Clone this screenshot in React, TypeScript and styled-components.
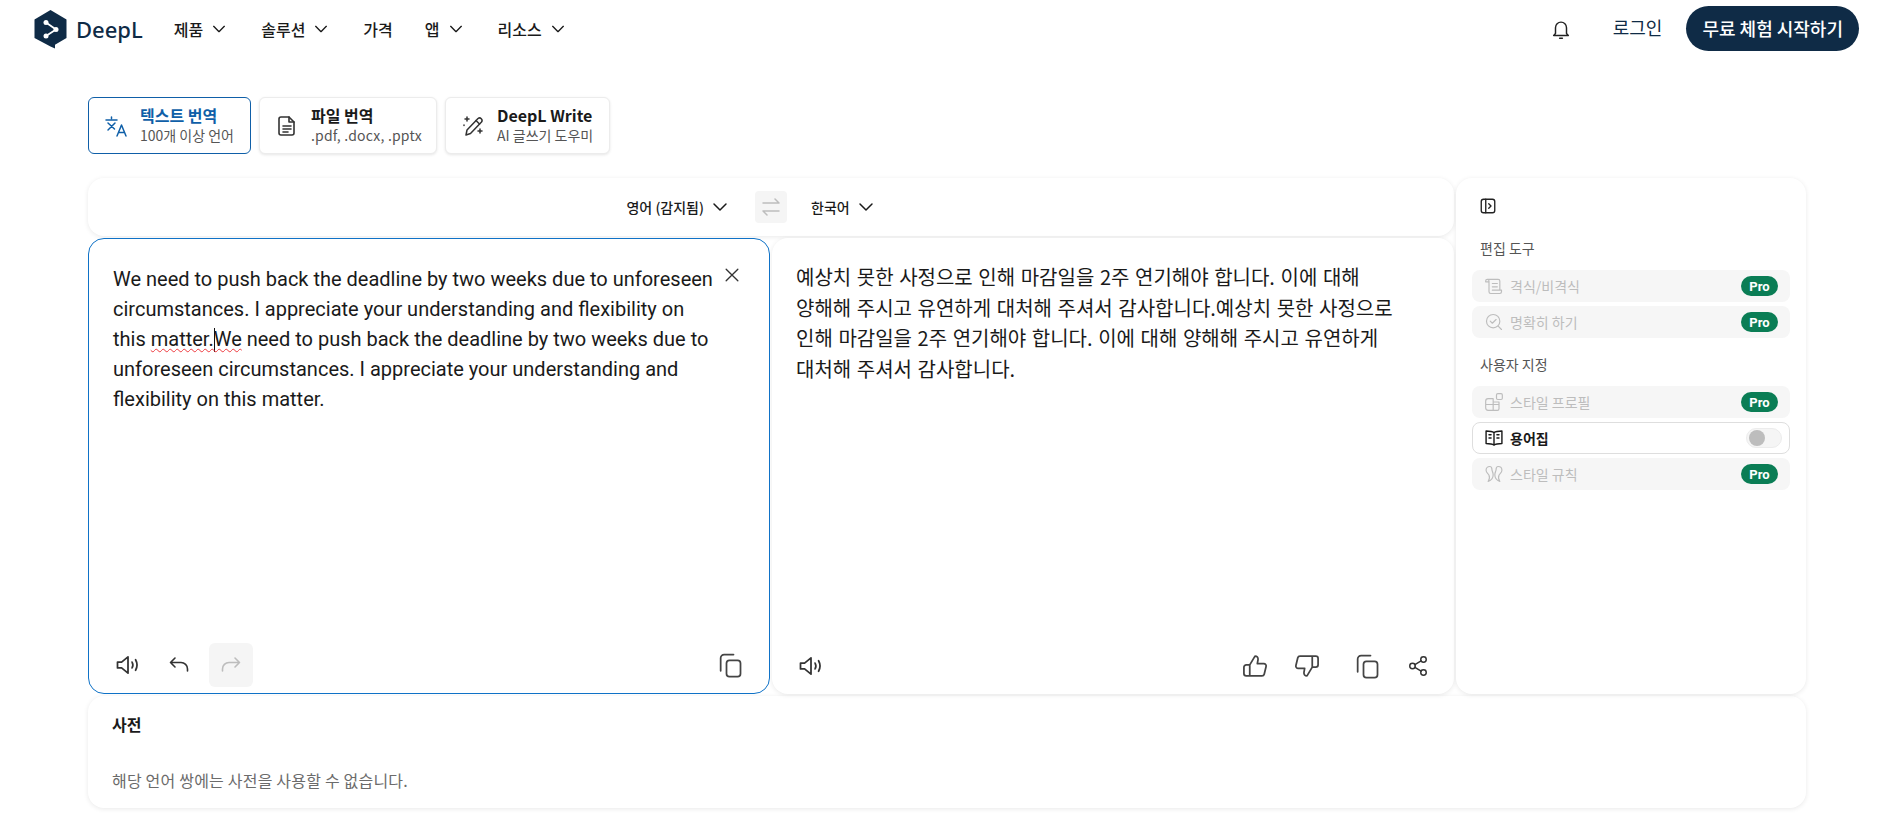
import React from "react";
import styled, { createGlobalStyle } from "styled-components";

const GlobalStyle = createGlobalStyle`
  html, body { margin: 0; padding: 0; background: #fff; }
  body { font-family: "Noto Sans CJK KR", "Noto Sans", sans-serif; color: #1a1a1a; }
  * { box-sizing: border-box; }
`;

const Page = styled.div`
  width: 1898px;
  height: 826px;
  overflow: hidden;
  background: #fff;
`;

const Header = styled.header`
  height: 58px;
  display: flex;
  align-items: center;
  padding: 0 39px 0 34px;
`;
const LogoWrap = styled.div`
  display: flex;
  align-items: center;
  gap: 9px;
  margin-right: 31px;
`;
const LogoText = styled.span`
  font-family: "Noto Sans", sans-serif;
  font-weight: 500;
  font-size: 22px;
  color: #0f2b46;
`;
const Nav = styled.nav`
  display: flex;
  align-items: center;
  gap: 34px;
`;
const NavItem = styled.span<{ $tight?: boolean }>`
  display: flex;
  align-items: center;
  gap: 8px;
  font-size: 16px;
  font-weight: 500;
  color: #1a1a1a;
  margin-right: ${(p) => (p.$tight ? -2 : 0)}px;
`;
const HeaderRight = styled.div`
  margin-left: auto;
  display: flex;
  align-items: center;
`;
const BellSlot = styled.span`
  display: flex;
  margin-right: 41px;
`;
const Login = styled.span`
  font-size: 18px;
  color: #0f2b46;
  margin-right: 24px;
  margin-bottom: 4px;
`;
const Cta = styled.span`
  height: 45px;
  padding: 0 16px;
  background: #0f2b46;
  color: #fff;
  border-radius: 23px;
  font-size: 18px;
  font-weight: 500;
  display: flex;
  align-items: center;
  margin-bottom: 2px;
`;

const Content = styled.main`
  padding: 39px 92px 0 88px;
`;
const Tabs = styled.div`
  display: flex;
  gap: 8px;
  margin-bottom: 24px;
`;
const Tab = styled.div<{ $active?: boolean; $w: number }>`
  width: ${(p) => p.$w}px;
  height: 57px;
  border-radius: 6px;
  display: flex;
  align-items: center;
  gap: 12px;
  padding-left: 15px;
  background: #fff;
  border: 1px solid ${(p) => (p.$active ? "#0f5fa8" : "#ececec")};
  box-shadow: ${(p) => (p.$active ? "none" : "0 1px 3px rgba(0,0,0,.10)")};
`;
const TabText = styled.div`
  display: flex;
  flex-direction: column;
  margin-top: -2px;
`;
const TabTitle = styled.span<{ $active?: boolean }>`
  font-size: 16px;
  line-height: 20px;
  font-weight: 700;
  color: ${(p) => (p.$active ? "#0f5fa8" : "#1a1a1a")};
`;
const TabSub = styled.span<{ $wide?: boolean }>`
  font-size: 14px;
  line-height: 20px;
  letter-spacing: ${(p) => (p.$wide ? "0.2px" : "normal")};
  color: #555;
`;

const Workspace = styled.div`
  display: grid;
  grid-template-columns: 1366px 350px;
  column-gap: 2px;
`;
const LeftCol = styled.div`
  display: flex;
  flex-direction: column;
  gap: 2px;
`;
const LangBar = styled.div`
  height: 58px;
  padding-bottom: 1px;
  background: #fff;
  border-radius: 16px;
  box-shadow: 0 1px 5px rgba(0,0,0,.09);
  display: grid;
  grid-template-columns: 1fr auto 1fr;
  align-items: center;
`;
const LangItem = styled.span<{ $end?: boolean }>`
  display: flex;
  align-items: center;
  justify-self: ${(p) => (p.$end ? "end" : "start")};
  margin-right: ${(p) => (p.$end ? 2 : 0)}px;
  gap: 7px;
  font-size: 14px;
  font-weight: 500;
  color: #1a1a1a;
`;
const SwapButton = styled.span`
  width: 32px;
  height: 32px;
  background: #f5f5f5;
  border-radius: 4px;
  margin: 0 24px;
  display: flex;
  align-items: center;
  justify-content: center;
`;
const Editors = styled.div`
  display: grid;
  grid-template-columns: 682px 682px;
  column-gap: 2px;
  height: 456px;
`;
const SourcePane = styled.section`
  position: relative;
  border: 1px solid #0f72c7;
  border-radius: 16px;
  padding: 25px 24px 0 24px;
  display: flex;
  flex-direction: column;
  background: #fff;
`;
const TargetPane = styled.section`
  border-radius: 16px;
  padding: 24px 24px 0 24px;
  display: flex;
  flex-direction: column;
  background: #fff;
  box-shadow: 0 1px 5px rgba(0,0,0,.09);
`;
const SourceText = styled.div`
  font-family: Roboto, sans-serif;
  font-size: 20px;
  line-height: 30px;
  color: #1a1a1a;
  width: 602px;
`;
const Squiggle = styled.span`
  text-decoration: underline wavy #ee3a3f 1.4px;
  text-underline-offset: 2px;
`;
const Caret = styled.span`
  display: inline-block;
  width: 0;
  height: 24px;
  margin-right: -1px;
  vertical-align: -6px;
  border-left: 1px solid #111;
`;
const TargetText = styled.div`
  font-size: 20px;
  word-spacing: 1.1px;
  word-break: keep-all;
  line-height: 30.5px;
  color: #1a1a1a;
  width: 610px;
`;
const CloseSlot = styled.span`
  position: absolute;
  top: 26px;
  right: 27px;
  display: flex;
`;
const PaneFooter = styled.div<{ $right: number }>`
  margin: auto -${(p) => p.$right}px 6px -7px;
  height: 45px;
  display: flex;
  align-items: center;
`;
const IconBtn = styled.span<{ $disabled?: boolean; $ml?: number }>`
  width: 44px;
  height: 44px;
  border-radius: 6px;
  background: ${(p) => (p.$disabled ? "#f5f5f5" : "transparent")};
  display: flex;
  align-items: center;
  justify-content: center;
  margin-left: ${(p) => p.$ml ?? 0}px;
`;
const Spacer = styled.span`
  flex: 1;
`;

const Side = styled.aside`
  height: 516px;
  background: #fff;
  border-radius: 16px;
  box-shadow: 0 1px 5px rgba(0,0,0,.09);
  padding: 19px 16px 0 16px;
`;
const SideToggle = styled.div`
  height: 18px;
  margin: 0 0 23px 7px;
  display: flex;
`;
const SideHeading = styled.div<{ $mt?: number }>`
  font-size: 14px;
  line-height: 20px;
  color: #555;
  margin: ${(p) => p.$mt ?? 0}px 0 12px 8px;
`;
const SideList = styled.div`
  display: flex;
  flex-direction: column;
  gap: 4px;
`;
const SideRow = styled.div<{ $active?: boolean }>`
  height: 32px;
  border-radius: 8px;
  background: ${(p) => (p.$active ? "#fff" : "#f6f6f6")};
  border: ${(p) => (p.$active ? "1px solid #dedede" : "none")};
  display: flex;
  align-items: center;
  padding: ${(p) => (p.$active ? "0 7px 0 11px" : "0 12px")};
  gap: 6px;
  font-size: 14px;
  font-weight: ${(p) => (p.$active ? 700 : 400)};
  color: ${(p) => (p.$active ? "#1a1a1a" : "#bdbdbd")};
`;
const RowLabel = styled.span`
  flex: 1;
`;
const ProBadge = styled.span`
  width: 37px;
  height: 20px;
  border-radius: 10px;
  background: #0a7d55;
  color: #fff;
  font-family: Roboto, sans-serif;
  font-size: 13px;
  font-weight: 700;
  display: flex;
  align-items: center;
  justify-content: center;
`;
const Toggle = styled.span`
  width: 36px;
  height: 20px;
  border-radius: 10px;
  background: #f5f5f5;
  border: 1px solid #ececec;
  display: flex;
  align-items: center;
  padding-left: 2px;
`;
const Knob = styled.span`
  width: 16px;
  height: 16px;
  border-radius: 50%;
  background: #bdbdbd;
`;

const Dictionary = styled.section`
  margin-top: 2px;
  height: 112px;
  background: #fff;
  border-radius: 16px;
  box-shadow: 0 1px 5px rgba(0,0,0,.09);
  padding: 16px 24px;
`;
const DictTitle = styled.div`
  font-size: 16px;
  line-height: 24px;
  font-weight: 700;
  color: #1a1a1a;
`;
const DictNote = styled.div`
  margin-top: 32px;
  font-size: 16px;
  line-height: 24px;
  letter-spacing: 0.2px;
  color: #6b6b6b;
`;

type IP = { s?: number; c?: string; w?: number; children: React.ReactNode };
const I = ({ s = 24, c = "#3a3a3a", w = 1.6, children }: IP) => (
  <svg width={s} height={s} viewBox="0 0 24 24" fill="none" stroke={c} strokeWidth={w} strokeLinecap="round" strokeLinejoin="round">
    {children}
  </svg>
);
const Chevron = ({ s = 16 }: { s?: number }) => (
  <I s={s} c="#1a1a1a" w={2}>
    <path d="M4 8l8 8 8-8" />
  </I>
);
const Speaker = () => (
  <I s={28} c="#333" w={1.5}>
    <path d="M3 9.500v5h3.500L12 19V5L6.500 9.500H3z" />
    <path d="M15.500 9.500c.9 1.600.9 3.400 0 5" />
    <path d="M18.500 7.500c1.600 2.900 1.600 6.100 0 9" />
  </I>
);
const Copy = () => (
  <I s={28} c="#444" w={1.5}>
    <rect x="9" y="8" width="12" height="14" rx="2.5" />
    <path d="M15 3H7a3 3 0 0 0-3 3v11" />
  </I>
);
const Logo = () => (
  <svg width="33" height="39" viewBox="0 0 33 39">
    <path d="M16.5 0L32.5 9.5V28L21 34.8V38.5L16.5 36.5L0.5 28V9.5z" fill="#0f2b46" />
    <circle cx="12" cy="12.5" r="2.5" fill="#fff" />
    <circle cx="22" cy="19.5" r="2.5" fill="#fff" />
    <circle cx="12" cy="26" r="2.5" fill="#fff" />
    <path d="M12 12.5l10 7-10 6.5" stroke="#fff" strokeWidth="1.8" fill="none" />
  </svg>
);

export default function App() {
  return (
    <Page>
      <GlobalStyle />
      <Header>
        <LogoWrap>
          <Logo />
          <LogoText>DeepL</LogoText>
        </LogoWrap>
        <Nav>
          <NavItem>제품 <Chevron /></NavItem>
          <NavItem>솔루션 <Chevron /></NavItem>
          <NavItem $tight>가격</NavItem>
          <NavItem>앱 <Chevron /></NavItem>
          <NavItem>리소스 <Chevron /></NavItem>
        </Nav>
        <HeaderRight>
          <BellSlot>
            <I s={22} c="#222" w={1.6}>
              <path d="M6 17V10.5a6 6 0 0 1 12 0V17l2 2H4l2-2z" />
              <path d="M10.5 22h3" />
            </I>
          </BellSlot>
          <Login>로그인</Login>
          <Cta>무료 체험 시작하기</Cta>
        </HeaderRight>
      </Header>
      <Content>
        <Tabs>
          <Tab $active $w={163}>
            <I s={24} c="#0f5fa8" w={1.5}>
              <path d="M2 6h11M7.5 3v1.5M4 9l6.5 6M11 9l-7 7" />
              <path d="M13 22l4.5-11L22 22M14.5 18.5h6" />
            </I>
            <TabText>
              <TabTitle $active>텍스트 번역</TabTitle>
              <TabSub>100개 이상 언어</TabSub>
            </TabText>
          </Tab>
          <Tab $w={178}>
            <I s={24} c="#333" w={1.6}>
              <path d="M6 3h8l5 5v11a2 2 0 0 1-2 2H6a2 2 0 0 1-2-2V5a2 2 0 0 1 2-2z" />
              <path d="M14 3v5h5M8 12h8M8 15h8M8 18h5" />
            </I>
            <TabText>
              <TabTitle>파일 번역</TabTitle>
              <TabSub $wide>.pdf, .docx, .pptx</TabSub>
            </TabText>
          </Tab>
          <Tab $w={165}>
            <I s={24} c="#333" w={1.5}>
              <path d="M5 21l1-5L17 4.500a2.500 2.500 0 0 1 3.500 3.500L9.500 19.500 5 21z" />
              <path d="M15 6.500l3.500 3.500M6 3v4M4 5h4M19 15v4M17 17h4M3 11v.5" />
            </I>
            <TabText>
              <TabTitle>DeepL Write</TabTitle>
              <TabSub>AI 글쓰기 도우미</TabSub>
            </TabText>
          </Tab>
        </Tabs>
        <Workspace>
          <LeftCol>
            <LangBar>
              <LangItem $end>영어 (감지됨) <Chevron s={18} /></LangItem>
              <SwapButton>
                <I s={24} c="#bdbdbd" w={1.5}>
                  <path d="M4 8h16M16 4l4 4M20 16H4M8 20l-4-4" />
                </I>
              </SwapButton>
              <LangItem>한국어 <Chevron s={18} /></LangItem>
            </LangBar>
            <Editors>
              <SourcePane>
                <SourceText>
                  We need to push back the deadline by two weeks due to unforeseen circumstances. I appreciate your understanding and flexibility on this <Squiggle>matter.<Caret />We</Squiggle> need to push back the deadline by two weeks due to unforeseen circumstances. I appreciate your understanding and flexibility on this matter.
                </SourceText>
                <CloseSlot>
                  <I s={20} c="#333" w={1.6}>
                    <path d="M5 5l14 14M19 5L5 19" />
                  </I>
                </CloseSlot>
                <PaneFooter $right={7}>
                  <IconBtn><Speaker /></IconBtn>
                  <IconBtn $ml={7}>
                    <I s={24} c="#333" w={1.6}>
                      <path d="M8 5L3.500 9.500 8 14M3.500 9.500H14a6.500 6.500 0 0 1 6.500 6.500v2" />
                    </I>
                  </IconBtn>
                  <IconBtn $ml={8} $disabled>
                    <I s={24} c="#bdbdbd" w={1.6}>
                      <path d="M16 5l4.500 4.500L16 14M20.500 9.500H10A6.500 6.500 0 0 0 3.500 16v2" />
                    </I>
                  </IconBtn>
                  <Spacer />
                  <IconBtn><Copy /></IconBtn>
                </PaneFooter>
              </SourcePane>
              <TargetPane>
                <TargetText>
                  예상치 못한 사정으로 인해 마감일을 2주 연기해야 합니다. 이에 대해 양해해 주시고 유연하게 대처해 주셔서 감사합니다.예상치 못한 사정으로 인해 마감일을 2주 연기해야 합니다. 이에 대해 양해해 주시고 유연하게 대처해 주셔서 감사합니다.
                </TargetText>
                <PaneFooter $right={10}>
                  <IconBtn><Speaker /></IconBtn>
                  <Spacer />
                  <IconBtn>
                    <I s={28} c="#444" w={1.5}>
                      <path d="M7.500 11L12 3.500c1.800 0 2.800 1.200 2.600 3L14 10h5.500a2 2 0 0 1 2 2.500l-1.600 6.500a2 2 0 0 1-2 1.500H4.500a2 2 0 0 1-2-2V13a2 2 0 0 1 2-2h3zM7.500 11v9.500" />
                    </I>
                  </IconBtn>
                  <IconBtn $ml={8}>
                    <I s={28} c="#444" w={1.5}>
                      <path d="M16.500 13L12 20.500c-1.800 0-2.800-1.200-2.600-3L10 14H4.500a2 2 0 0 1-2-2.500L4.100 5a2 2 0 0 1 2-1.500H19.500a2 2 0 0 1 2 2V11a2 2 0 0 1-2 2h-3zM16.500 13V3.500" />
                    </I>
                  </IconBtn>
                  <IconBtn $ml={16}><Copy /></IconBtn>
                  <IconBtn $ml={7}>
                    <I s={22} c="#333" w={1.6}>
                      <circle cx="18" cy="5" r="3" />
                      <circle cx="6" cy="12" r="3" />
                      <circle cx="18" cy="19" r="3" />
                      <path d="M8.600 10.500l6.800-4M8.600 13.500l6.800 4" />
                    </I>
                  </IconBtn>
                </PaneFooter>
              </TargetPane>
            </Editors>
          </LeftCol>
          <Side>
            <SideToggle>
              <I s={18} c="#222" w={1.8}>
                <rect x="3" y="3" width="18" height="18" rx="3" />
                <path d="M9 3v18M13 9l3 3-3 3" />
              </I>
            </SideToggle>
            <SideHeading>편집 도구</SideHeading>
            <SideList>
              <SideRow>
                <I s={20} c="#bdbdbd" w={1.4}>
                  <path d="M4 4h13a2 2 0 0 1 2 2v11M4 4a2 2 0 0 0-2 2v1h4M4 4a2 2 0 0 1 2 2v13a2 2 0 0 0 2 2h11a2 2 0 0 0 2-2v-2H10M10 9h6M10 13h6" />
                </I>
                <RowLabel>격식/비격식</RowLabel>
                <ProBadge>Pro</ProBadge>
              </SideRow>
              <SideRow>
                <I s={20} c="#bdbdbd" w={1.4}>
                  <circle cx="11" cy="11" r="8" />
                  <path d="M7.500 11l2.500 2.500 4.500-4.500M17 17l4 4" />
                </I>
                <RowLabel>명확히 하기</RowLabel>
                <ProBadge>Pro</ProBadge>
              </SideRow>
            </SideList>
            <SideHeading $mt={16}>사용자 지정</SideHeading>
            <SideList>
              <SideRow>
                <I s={20} c="#bdbdbd" w={1.4}>
                  <rect x="15" y="2" width="7" height="7" rx="1.500" />
                  <path d="M5 8h6v14H5a3 3 0 0 1-3-3v-8a3 3 0 0 1 3-3zM2 15h16M11 22h5a2 2 0 0 0 2-2v-8h-7" />
                </I>
                <RowLabel>스타일 프로필</RowLabel>
                <ProBadge>Pro</ProBadge>
              </SideRow>
              <SideRow $active>
                <I s={20} c="#1a1a1a" w={1.7}>
                  <path d="M12 5.500C10 4 7 3.500 2.500 3.500v15c4.500 0 7.500.5 9.500 2 2-1.500 5-2 9.500-2v-15C17 3.500 14 4 12 5.500zM12 5.500v15" />
                  <path d="M6 8h2.500M6 12h2.500M15.500 8H18M15.500 12H18" />
                </I>
                <RowLabel>용어집</RowLabel>
                <Toggle><Knob /></Toggle>
              </SideRow>
              <SideRow>
                <I s={20} c="#bdbdbd" w={1.4}>
                  <path d="M7 3C4 3 2.500 5 2.500 7.500c0 3 2.500 4 3.500 6 1 2 .5 5-1 7.500 3-1 6-4 6-8 0-3-1.500-4.500-1.500-6.500 0-2-.5-3.500-2.500-3.500z" />
                  <path d="M17 3c3 0 4.500 2 4.500 4.500 0 3-2.500 4-3.500 6-1 2-.5 5 1 7.500-3-1-6-4-6-8 0-3 1.500-4.500 1.500-6.500 0-2 .5-3.500 2.500-3.500z" />
                </I>
                <RowLabel>스타일 규칙</RowLabel>
                <ProBadge>Pro</ProBadge>
              </SideRow>
            </SideList>
          </Side>
        </Workspace>
        <Dictionary>
          <DictTitle>사전</DictTitle>
          <DictNote>해당 언어 쌍에는 사전을 사용할 수 없습니다.</DictNote>
        </Dictionary>
      </Content>
    </Page>
  );
}
